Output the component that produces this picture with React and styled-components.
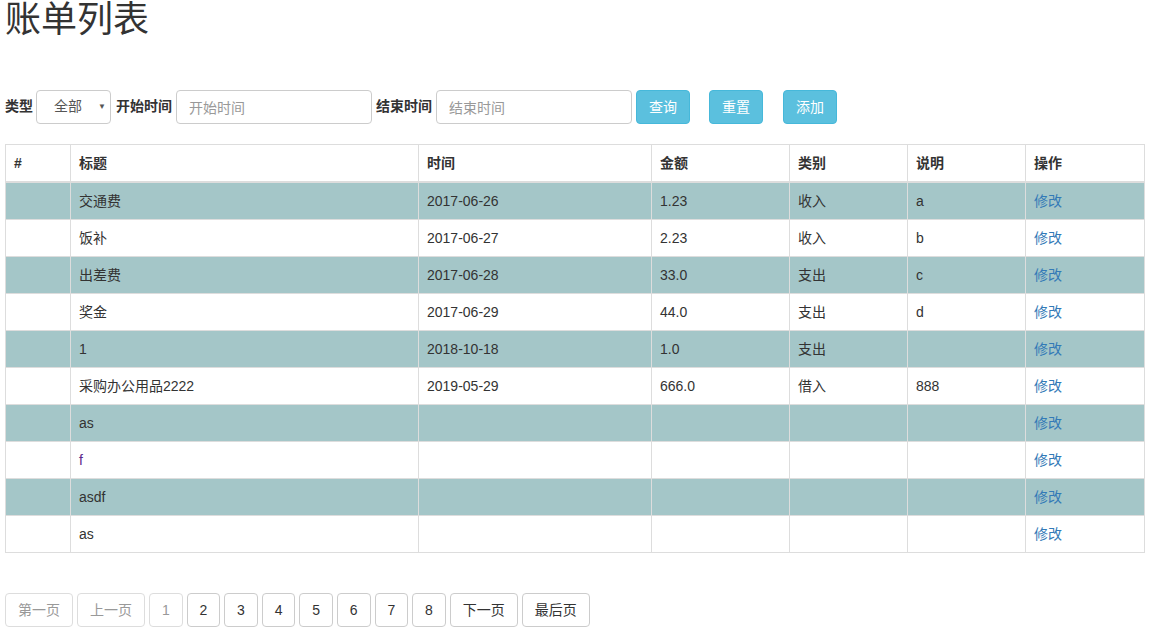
import React from 'react'
import styled, { createGlobalStyle } from 'styled-components'

const GlobalStyle = createGlobalStyle`
  * { box-sizing: border-box; }
  body {
    margin: 0;
    background: #fff;
    color: #333;
    font-family: "Liberation Sans", Arial, "Noto Sans CJK SC", sans-serif;
    font-size: 14px;
    line-height: 1.42857;
  }
`

const Page = styled.div`
  padding: 0 5px;
  width: 1150px;
`

const Title = styled.h1`
  margin: 0;
  font-size: 36px;
  font-weight: 400;
  line-height: 1.1;
  color: #333;
`

const Toolbar = styled.form`
  display: flex;
  align-items: center;
  margin-top: 50px;
  height: 34px;
`

const Label = styled.label`
  font-weight: bold;
  margin-right: ${({ $gap }) => $gap ?? 4}px;
  padding-top: 1px;
  white-space: nowrap;
`

const SelectWrap = styled.div`
  position: relative;
  width: 75px;
  height: 34px;
  margin-right: 5px;
`

const Select = styled.select`
  appearance: none;
  width: 100%;
  height: 100%;
  padding: 1px 0 0 17px;
  border: 1px solid #ccc;
  border-radius: 4px;
  background: #fff;
  color: #555;
  font: inherit;
`

const Caret = styled.span`
  position: absolute;
  right: 5px;
  top: 50%;
  transform: translateY(-50%);
  font-size: 8px;
  color: #555;
  pointer-events: none;
`

const Input = styled.input`
  width: 196px;
  height: 34px;
  padding: 7px 12px 5px;
  border: 1px solid #ccc;
  border-radius: 4px;
  font: inherit;
  color: #555;
  margin-right: 4px;
  &::placeholder { color: #999; }
`

const InfoButton = styled.button`
  width: 54px;
  height: 34px;
  padding: 2px 0 0;
  margin-left: ${({ $gap }) => $gap || 0}px;
  border: 1px solid #46b8da;
  border-radius: 4px;
  background: #5bc0de;
  color: #fff;
  font: inherit;
`

const Table = styled.table`
  width: 1140px;
  margin-top: 20px;
  border-collapse: collapse;
  border: 1px solid #ddd;
`

const Th = styled.th`
  padding: 9px 8px 7px;
  text-align: left;
  font-weight: bold;
  border: 1px solid #ddd;
  border-bottom: 2px solid #ddd;
`

const Row = styled.tr`
  background: ${({ $striped }) => ($striped ? '#a4c6c8' : '#fff')};
`

const Td = styled.td`
  padding: 9px 8px 7px;
  height: 37px;
  border: 1px solid #ddd;
  color: ${({ $tone }) => $tone || '#333'};
`

const EditLink = styled.a`
  color: #337ab7;
  text-decoration: none;
`

const Pager = styled.div`
  display: flex;
  gap: 4px;
  margin-top: 40px;
`

const PageButton = styled.button`
  height: 34px;
  width: ${({ $digit }) => ($digit ? '33.6px' : 'auto')};
  padding: ${({ $digit }) => ($digit ? '7px 0 5px' : '7px 12px 5px')};
  border: 1px solid ${({ disabled }) => (disabled ? '#ddd' : '#ccc')};
  border-radius: 4px;
  background: #fff;
  color: ${({ disabled }) => (disabled ? '#999' : '#333')};
  font: inherit;
`

const widths = [65, 348, 233, 138, 118, 118, 119]
const headers = ['#', '标题', '时间', '金额', '类别', '说明', '操作']

const bills = [
  { title: '交通费', time: '2017-06-26', amount: '1.23', kind: '收入', note: 'a' },
  { title: '饭补', time: '2017-06-27', amount: '2.23', kind: '收入', note: 'b' },
  { title: '出差费', time: '2017-06-28', amount: '33.0', kind: '支出', note: 'c' },
  { title: '奖金', time: '2017-06-29', amount: '44.0', kind: '支出', note: 'd' },
  { title: '1', time: '2018-10-18', amount: '1.0', kind: '支出', note: '' },
  { title: '采购办公用品2222', time: '2019-05-29', amount: '666.0', kind: '借入', note: '888' },
  { title: 'as', time: '', amount: '', kind: '', note: '' },
  { title: 'f', time: '', amount: '', kind: '', note: '', tone: '#5b2a8c' },
  { title: 'asdf', time: '', amount: '', kind: '', note: '' },
  { title: 'as', time: '', amount: '', kind: '', note: '' },
]

const pages = [
  { label: '第一页', disabled: true },
  { label: '上一页', disabled: true },
  { label: '1', disabled: true },
  { label: '2' },
  { label: '3' },
  { label: '4' },
  { label: '5' },
  { label: '6' },
  { label: '7' },
  { label: '8' },
  { label: '下一页' },
  { label: '最后页' },
]

export default function App() {
  return (
    <Page>
      <GlobalStyle />
      <Title>账单列表</Title>
      <Toolbar onSubmit={(e) => e.preventDefault()}>
        <Label $gap={3}>类型</Label>
        <SelectWrap>
          <Select defaultValue="all">
            <option value="all">全部</option>
            <option value="in">收入</option>
            <option value="out">支出</option>
          </Select>
          <Caret>▼</Caret>
        </SelectWrap>
        <Label>开始时间</Label>
        <Input placeholder="开始时间" />
        <Label>结束时间</Label>
        <Input placeholder="结束时间" />
        <InfoButton type="button">查询</InfoButton>
        <InfoButton type="button" $gap={19}>重置</InfoButton>
        <InfoButton type="button" $gap={20}>添加</InfoButton>
      </Toolbar>
      <Table>
        <colgroup>
          {widths.map((w, i) => <col key={i} style={{ width: w }} />)}
        </colgroup>
        <thead>
          <tr>
            {headers.map((h) => <Th key={h}>{h}</Th>)}
          </tr>
        </thead>
        <tbody>
          {bills.map((b, i) => (
            <Row key={i} $striped={i % 2 === 0}>
              <Td />
              <Td $tone={b.tone}>{b.title}</Td>
              <Td>{b.time}</Td>
              <Td>{b.amount}</Td>
              <Td>{b.kind}</Td>
              <Td>{b.note}</Td>
              <Td><EditLink href="#">修改</EditLink></Td>
            </Row>
          ))}
        </tbody>
      </Table>
      <Pager>
        {pages.map((p) => (
          <PageButton key={p.label} disabled={p.disabled} $digit={/^\d+$/.test(p.label)}>
            {p.label}
          </PageButton>
        ))}
      </Pager>
    </Page>
  )
}
